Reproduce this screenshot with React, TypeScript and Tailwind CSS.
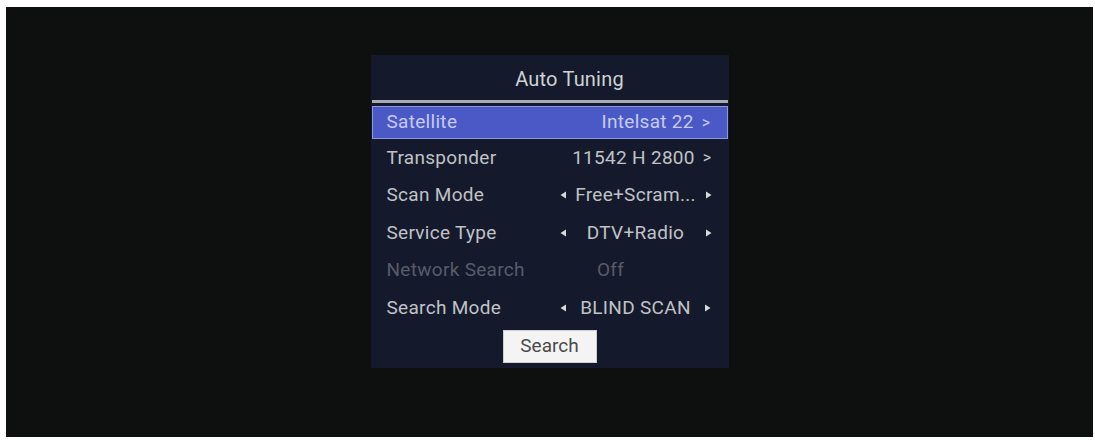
const rows = [
  { label: 'Transponder', value: '11542 H 2800', kind: 'link' },
  { label: 'Scan Mode', value: 'Free+Scram...', kind: 'choice' },
  { label: 'Service Type', value: 'DTV+Radio', kind: 'choice' },
  { label: 'Network Search', value: 'Off', kind: 'off' },
  { label: 'Search Mode', value: 'BLIND SCAN', kind: 'choice' },
]

function Tri({ dir }: { dir: 'l' | 'r' }) {
  return (
    <svg width="7" height="8" viewBox="0 0 7 8" className="shrink-0">
      <path d={dir === 'l' ? 'M6 0.5 L0.5 4 L6 7.5 Z' : 'M1 0.5 L6.5 4 L1 7.5 Z'} fill="#d8dae0" />
    </svg>
  )
}

export default function App() {
  return (
    <div className="w-[1095px] h-[440px] bg-white pt-[7px] pl-[6px] pr-[2px] pb-[3px] font-['Roboto',sans-serif]">
      <div className="w-full h-full bg-[#0e100f] flex justify-center pt-[48px]">
        <div className="w-[358px] h-[313px] bg-[#141a2b] flex flex-col">
          {/* Title */}
          <div className="h-[45px] flex items-center justify-center pl-[40px] text-[20px] tracking-[0.2px] text-[#d0d2d6] pt-[2px]">
            Auto Tuning
          </div>
          <div className="h-[3px] mx-[1px] bg-[#a8abb3]" />

          {/* Selected row */}
          <div className="mt-[3px] h-[33px] mx-[1px] bg-[#4b59c6] border border-[#8e98e0] flex items-center justify-between pl-[14px] pr-[16px] text-[19px] tracking-[0.3px] text-[#c5cbf2]">
            <span>Satellite</span>
            <span className="flex items-center gap-[8px]">
              Intelsat 22 <span className="text-[16px]">&gt;</span>
            </span>
          </div>

          {rows.map((r) => (
            <div
              key={r.label}
              className={`h-[37.5px] flex items-center justify-between pl-[16px] pr-[17px] text-[19px] tracking-[0.3px] ${
                r.kind === 'off' ? 'text-[#585c68]' : 'text-[#c0c2c7]'
              }`}
            >
              <span>{r.label}</span>
              {r.kind === 'link' && (
                <span className="flex items-center gap-[8px]">
                  {r.value} <span className="text-[16px]">&gt;</span>
                </span>
              )}
              {r.kind === 'choice' && (
                <span className="w-[152px] flex items-center justify-between">
                  <Tri dir="l" />
                  <span>{r.value}</span>
                  <Tri dir="r" />
                </span>
              )}
              {r.kind === 'off' && <span className="w-[152px] pr-[50px] text-center">{r.value}</span>}
            </div>
          ))}

          <div className="flex justify-center mt-[3px]">
            <button className="w-[94px] h-[33px] bg-[#f4f4f4] text-[#4a4a4a] text-[19px] border border-[#cfcfcf]">
              Search
            </button>
          </div>
        </div>
      </div>
    </div>
  )
}
